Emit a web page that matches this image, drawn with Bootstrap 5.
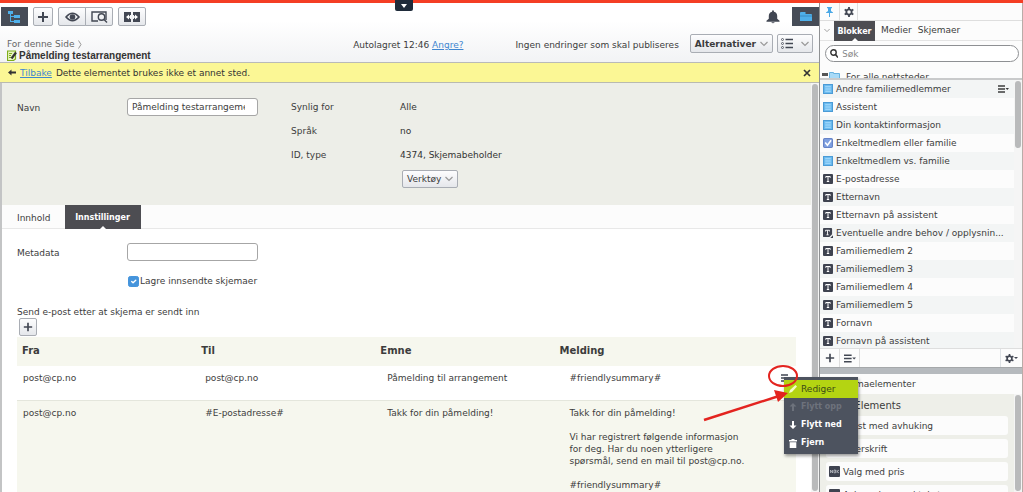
<!DOCTYPE html>
<html lang="no">
<head>
<meta charset="utf-8">
<meta name="viewport" content="width=device-width, initial-scale=1">
<title>Påmelding testarrangement</title>
<link href="https://cdn.jsdelivr.net/npm/bootstrap@5.3.0/dist/css/bootstrap.min.css" rel="stylesheet">
<script src="https://cdn.jsdelivr.net/npm/bootstrap@5.3.0/dist/js/bootstrap.bundle.min.js"></script>
<style>
  body { font: 9px/12px "DejaVu Sans", Verdana, sans-serif; color: #3c3c3c; background: #fff; }
  .app { height: 100vh; border-top: 3px solid #f43e24; }
  svg { display: block; flex: none; }
  .ink { color: #424753; }
  a { color: #3f86d0; }

  .pull-tab { position: absolute; top: -3px; left: 395px; width: 18px; height: 11px; background: #1f2b3a; border-radius: 0 0 2px 2px; }
  .editor { min-width: 0; }
  .head { height: 60px; background: linear-gradient(#fff 30%, #f2f3f5); border-bottom: 1px solid #b9bab9; }
  .tools { height: 31px; padding: 4px 0 0 1px; gap: 5px; }
  .btn-tool { --bs-btn-padding-x: 0; --bs-btn-padding-y: 0; --bs-btn-font-size: 9px; --bs-btn-line-height: 12px; --bs-btn-border-radius: 2px;
    --bs-btn-border-color: #a9adb4; --bs-btn-color: #3c3c3c; display: inline-flex; align-items: center; justify-content: center;
    height: 19px; background: linear-gradient(#fdfdfe, #e5e7eb); }
  .btn-tool.on { background: #464c57; border-color: #464c57; color: #4fb0ea; border-radius: 0; }
  .w-20 { width: 20px; } .w-28 { width: 28px; } .w-27 { width: 27px; } .w-36 { width: 36px; } .w-18 { width: 18px; }
  .crumbs { padding: 4px 0 0 7px; color: #666; }
  .doc-title { font: bold 10px/10px "Liberation Sans", Arial, sans-serif; color: #333; padding-left: 7px; gap: 2px; }
  .status { padding-top: 5px; }
  .head-actions { padding: 0 6px 0 11px; }
  .notice { height: 20px; padding: 0 8px; background: #fbf795; color: #333; border-bottom: 1px solid #b9bab0; }

  .canvas { min-height: 0; border-left: 2px solid #c3c4c5; }
  .props { padding: 15px 0 18px 15px; height: 122px; background: #edeee8; }
  .c-label { width: 110px; flex: none; }
  .field { width: 131px; min-height: 0; height: 18px; padding: 0 12px 0 4px; font-size: 9px; line-height: 12px; color: #3c3c3c; border: 1px solid #a6a6a6; border-radius: 3px; }
  .facts { display: grid; grid-template-columns: 109px auto; row-gap: 12px; margin: 3px 0 0 33px; }
  .facts dt { font-weight: normal; }
  .facts dd { margin: 0; color: #333; }
  .facts .btn-tool { margin: -3px 0 0 2px; height: 18px; }

  .tabs { height: 24px; border-bottom: 1px solid #e8e8e8; background: #fcfcfc; }
  .tabs .nav-link { padding: 0 14px 0 15px; line-height: 26px; color: #3c3c3c; }
  .tabs .nav-link.active { position: relative; width: 76px; padding: 0; text-align: center; background: #4d4d52; color: #fff; font-weight: bold; font-size: 8px; height: 24px; }
  .nav-link.active::after { content: ""; position: absolute; left: 50%; bottom: 0; margin-left: -3px; border: 3px solid transparent; border-top: 0; border-bottom-color: #fff; }

  .settings { padding: 14px 15px 0; }
  .tick-row { gap: 1px; margin: 14px 0 15px; }
  .tick { width: 11px; height: 11px; margin: 0; border-radius: 2px; }
  .tick:checked { background-color: #4594dc; border-color: #4594dc; }
  .btn-add { height: 18px; margin: 0 0 0 2px; }
  .mails { margin: 1px 0 0; font-size: 9px; color: #3c3c3c; border-color: #e6e8e0; table-layout: fixed; --bs-table-bg: transparent; }
  .mails th, .mails td { border: 0; padding: 0; vertical-align: top; color: inherit; }
  .mails th { height: 29px; padding: 8px 0 0 5px; font-size: 10px; }
  .mails thead, .mails .alt { background: #f6f7ee; }
  .mails td { height: 34px; padding: 6px 0 0 6px; }
  .mails td:nth-child(2) { padding-left: 9px; }
  .mails td:nth-child(3) { padding-left: 12px; }
  .mails td:nth-child(4) { padding-left: 15px; }
  .mails .alt td { height: 100px; border-top: 1px solid #e4e6dc; }
  .c-mail { width: 23%; }
  .msg { width: 180px; }

  .row-menu { position: absolute; z-index: 20; top: 11px; right: -62px; width: 74px; padding: 3px 0 2px; background: #4d535f; box-shadow: 1px 2px 3px #0006; }
  .row-menu button { display: flex; align-items: center; gap: 4px; width: 100%; height: 18px; padding: 0 5px; border: 0; background: none; color: #fff; font-weight: bold; font-size: 8px; }
  .row-menu .pick { background: #b4d412; color: #3b4a16; font-weight: normal; font-size: 9px; }
  .row-menu .off { color: #6d727c; }
  .marker { position: absolute; z-index: 21; top: -3px; right: -4px; }

  .thumb { width: 6px; border-radius: 3px; background: #b9babb; }
  .track { width: 8px; padding: 1px; background: #f5f5f5; }
  .side { width: 204px; flex: none; border-left: 1px solid #8f9193; border-right: 1px solid #b9aca8; background: #fcfcfc; position: relative; }
  .side-top { height: 18px; border-bottom: 1px solid #dedede; }
  .side-top button, .side-foot button { height: 100%; border: 0; border-right: 1px solid #dedede; background: none; padding: 0; display: flex; align-items: center; justify-content: center; }
  .side-tabs { height: 20px; border-bottom: 1px solid #e4e4e4; }
  .side-tabs .nav-link { padding: 0 0 0 6px; line-height: 21px; color: #3c3c3c; }
  .side-tabs .nav-link.active { position: relative; width: 41px; height: 20px; padding: 0; text-align: center; background: #4d4d52; color: #fff; font-weight: bold; font-size: 8px; }
  .search { height: 17px; margin: 4px 3px 0 5px; padding: 0 4px; border: 1px solid #8e9093; border-radius: 9px; background: #fff; }
  .search input { border: 0; padding: 0; font-size: 9px; line-height: 12px; min-height: 0; background: none; }
  .search input::placeholder { color: #888; }
  .peek { height: 18px; padding: 9px 0 0 2px; overflow: hidden; border-bottom: 2px solid #c9cacb; }
  .blocks { height: 268px; overflow: hidden; }
  .blocks li { height: 18px; display: flex; align-items: center; gap: 3px; padding: 0 5px 0 3px; white-space: nowrap; }
  .blocks li:nth-child(odd) { background: #f3f5f5; }
  .side-foot { height: 20px; border-top: 1px solid #dedede; border-bottom: 1px solid #a5a8aa; }
  .side .splitter { height: 6px; background: #b6babe; }
  .elements { background: #eeefe9; padding: 6px 6px 0; }
  .elements-title { font-size: 10px; margin-bottom: 4px; }
  .tile { height: 19px; margin-bottom: 4px; padding: 0 3px; display: flex; align-items: center; gap: 3px; background: #fcfcfc; border-radius: 3px; }
</style>
</head>
<body class="overflow-hidden">

<svg width="0" height="0" class="position-absolute" aria-hidden="true">
  <symbol id="i-plus" viewBox="0 0 12 12"><path d="M6 1v10M1 6h10" stroke="currentColor" stroke-width="2"/></symbol>
  <symbol id="i-chev" viewBox="0 0 8 6"><path d="M.5 1 4 4.500 7.500 1" fill="none" stroke="#999" stroke-width="1.200"/></symbol>
  <symbol id="i-burger" viewBox="0 0 11 8"><path d="M0 1h7M0 4h7M0 7h7" stroke="currentColor" stroke-width="1.400"/><path d="M7.500 3h3.500l-1.700 2z" fill="currentColor"/></symbol>
  <symbol id="i-gear" viewBox="0 0 12 12"><circle cx="6" cy="6" r="3.200" fill="none" stroke="currentColor" stroke-width="2.200"/><path d="M6 0v2.500M6 9.500V12M.8 3l2.100 1.200M9.100 7.800l2.100 1.200M.8 9l2.100-1.200M9.100 4.200 11.200 3" stroke="currentColor" stroke-width="2.200"/></symbol>
  <symbol id="i-block" viewBox="0 0 9 9"><path d="M.5.5h8v8h-8z" fill="#6cbcf0" stroke="#4b9bd6"/><path d="M2 2.500h5M2 4.500h5M2 6.500h5" stroke="#b4e2ff" stroke-width=".8"/></symbol>
  <symbol id="i-check" viewBox="0 0 9 9"><rect x=".5" y=".5" width="8" height="8" rx="1" fill="#7fa0e0" stroke="#6683c8"/><path d="m2 4 2 2.500L7.300 2" fill="none" stroke="#fff" stroke-width="1.400"/></symbol>
  <symbol id="i-text" viewBox="0 0 10 10"><rect width="10" height="10" rx="1" fill="#3f4350"/><path d="M2.800 3.800V2.500h4.400v1.300M5 2.500v5M3.800 7.500h2.400" fill="none" stroke="#fff"/></symbol>
  <symbol id="i-area" viewBox="0 0 11 11"><path d="M1 0h8q1 0 1 1v6L7 10H1q-1 0-1-1V1q0-1 1-1zM11 8v3H8z" fill="#3f4350"/><path d="M2.800 3.800V2.500h4.400v1.300M5 2.500v5M3.800 7.500h2.400" fill="none" stroke="#fff"/></symbol>
  <symbol id="i-nok" viewBox="0 0 11 11"><rect width="11" height="11" rx="1" fill="#3f4350"/><path d="M1.500 7V4l2 3V4M5 4h1.500v2.800H5zM8 4v3M10 4 8.200 5.500 10 7" fill="none" stroke="#c5c8cf" stroke-width=".7"/></symbol>
  <symbol id="i-up" viewBox="0 0 8 8"><path d="M4 0l3.500 3.500H5V8H3V3.500H.5z" fill="currentColor"/></symbol>
</svg>

<div class="app d-flex position-relative">
  <button class="pull-tab border-0 p-0" aria-label="Vis meny"><svg width="6" height="4" class="mx-auto"><path d="M0 0h6L3 4z" fill="#fff"/></svg></button>

  <main class="editor flex-grow-1 d-flex flex-column">
    <header class="head flex-shrink-0">
      <div class="tools d-flex align-items-start ink">
        <button class="btn btn-tool on w-27" aria-label="Tre"><svg width="13" height="12" fill="currentColor"><path d="M0 0h5v3H3v2h3v1H3v4h3v1H2V3H0zM6 4h6v3H6zM6 9h6v3H6z"/></svg></button>
        <button class="btn btn-tool w-20 ink" aria-label="Ny"><svg width="12" height="12"><use href="#i-plus"/></svg></button>
        <div class="btn-group" role="group">
          <button class="btn btn-tool w-28 ink" aria-label="Vis"><svg width="15" height="10" viewBox="0 0 15 10"><path d="M1 5q6.500-7.500 13 0Q7.500 12.500 1 5z" fill="none" stroke="currentColor" stroke-width="1.600"/><circle cx="7.500" cy="5" r="2.800" fill="currentColor"/></svg></button>
          <button class="btn btn-tool w-28 ink" aria-label="Forhåndsvis"><svg width="17" height="12" viewBox="0 0 17 12" fill="none" stroke="currentColor" stroke-width="1.400"><path d="M7 10H1V1h14v8"/><circle cx="10.500" cy="6" r="3.200"/><path d="m13 8.500 3 3"/></svg></button>
        </div>
        <button class="btn btn-tool w-28 ink" aria-label="Utvid"><svg width="16" height="10" viewBox="0 0 16 10"><path d="M0 0h7v3H6v4h1v3H0zM9 0h7v10H9V7h1V3H9z" fill="currentColor"/><path d="M2 5l3-2.500v5zM14 5l-3-2.500v5z" fill="#fff"/><path d="M4.500 5H7M9 5h2.500" stroke="#fff" stroke-width="1.400"/></svg></button>
        <div class="ms-auto d-flex align-items-center gap-2">
          <svg width="14" height="14" viewBox="0 0 15 14" class="me-1" fill="currentColor"><path d="M6.500 0h2v1.300Q12 2 12 6v3l2.500 2v1H.5v-1L3 9V6q0-4 3.500-4.700zM5.500 12.500h4q-2 2.500-4 0z"/></svg>
          <button class="btn btn-tool on w-27" aria-label="Mapper"><svg width="12" height="10" viewBox="0 0 12 10" fill="currentColor"><path d="M1 0h4.500v2H11q1 0 1 1v6H0V1q0-1 1-1z"/><path d="M0 4h12" stroke="#2f7fb5" stroke-width=".7"/></svg></button>
        </div>
      </div>
      <div class="d-flex align-items-start justify-content-between">
        <div>
          <div class="crumbs d-flex align-items-center gap-1"><span>For denne Side</span> <svg width="4" height="9"><path d="M.5.5 3 4.500.5 8.500" fill="none" stroke="#999"/></svg></div>
          <div class="doc-title d-flex align-items-center"><svg width="10" height="11" viewBox="0 0 10 11"><path d="M.5 1h8v8l-2 1.500h-6z" fill="#e9f5c4" stroke="#7fae1c" stroke-width="1.200"/><path d="M2 3.500h3M2 5.500h2M2 7.500h2" stroke="#7fae1c"/><path d="m4.500 8.500 4.500-6" stroke="#333" stroke-width="2.200"/></svg><span>Påmelding testarrangement</span></div>
        </div>
        <div class="d-flex flex-shrink-0">
          <div class="d-flex status gap-5">
            <span class="me-1">Autolagret 12:46 <a href="#">Angre?</a></span>
            <span>Ingen endringer som skal publiseres</span>
          </div>
          <div class="d-flex gap-1 head-actions">
            <button class="btn btn-tool fw-bold px-1 gap-1">Alternativer <svg width="8" height="6"><use href="#i-chev"/></svg></button>
            <button class="btn btn-tool w-36 gap-2" aria-label="Listevisning"><svg width="12" height="11" viewBox="0 0 12 11"><path d="M4.500 1.500H12M4.500 5.500H12M4.500 9.500H12" stroke="#424753" stroke-width="1.500"/><g fill="none" stroke="#424753" stroke-width=".8"><circle cx="1.500" cy="1.500" r="1"/><circle cx="1.500" cy="5.500" r="1"/><circle cx="1.500" cy="9.500" r="1"/></g></svg><svg width="8" height="6"><use href="#i-chev"/></svg></button>
          </div>
        </div>
      </div>
    </header>

    <div class="notice flex-shrink-0 d-flex align-items-center gap-1">
      <svg width="8" height="7" viewBox="0 0 8 7"><path d="M0 3.500 3.500.5v2H8v2H3.500v2z" fill="#333"/></svg>
      <a href="#">Tilbake</a><span>Dette elementet brukes ikke et annet sted.</span>
      <button class="border-0 bg-transparent p-0 ms-auto" aria-label="Lukk"><svg width="8" height="8"><path d="m1 1 6 6M7 1 1 7" stroke="#333" stroke-width="1.700"/></svg></button>
    </div>

    <div class="canvas flex-grow-1 d-flex">
      <div class="flex-grow-1">
        <section class="props d-flex align-items-start">
          <label class="c-label pt-1" for="navn">Navn</label>
          <input id="navn" class="form-control field" value="Påmelding testarrangement">
          <dl class="facts">
            <dt>Synlig for</dt><dd>Alle</dd>
            <dt>Språk</dt><dd>no</dd>
            <dt>ID, type</dt><dd>4374, Skjemabeholder</dd>
            <dd></dd><dd><button class="btn btn-tool px-1 gap-1">Verktøy <svg width="8" height="6"><use href="#i-chev"/></svg></button></dd>
          </dl>
        </section>
        <nav class="tabs nav flex-nowrap">
          <a class="nav-link" href="#">Innhold</a>
          <a class="nav-link active" href="#">Innstillinger</a>
        </nav>
        <section class="settings">
          <div class="d-flex align-items-start">
            <label class="c-label pt-1" for="meta">Metadata</label>
            <input id="meta" class="form-control field">
          </div>
          <div class="tick-row d-flex align-items-center">
            <span class="c-label"></span>
            <input id="lagre" type="checkbox" class="form-check-input tick" checked>
            <label for="lagre">Lagre innsendte skjemaer</label>
          </div>
          <div class="pt-1">Send e-post etter at skjema er sendt inn</div>
          <button class="btn btn-tool btn-add w-18 ink d-flex" aria-label="Legg til"><svg width="10" height="10"><use href="#i-plus"/></svg></button>
          <table class="table mails">
            <thead><tr><th class="c-mail">Fra</th><th class="c-mail">Til</th><th class="c-mail">Emne</th><th>Melding</th></tr></thead>
            <tbody>
              <tr><td>post@cp.no</td><td>post@cp.no</td><td>Påmelding til arrangement</td>
                <td class="position-relative">#friendlysummary#
                  <button class="border-0 bg-transparent p-0 position-absolute top-0 end-0 mt-2 me-1 ink" aria-label="Radmeny"><svg width="11" height="8"><use href="#i-burger"/></svg></button>
                  <div class="row-menu">
                    <button class="pick"><svg width="8" height="8"><path d="M0 8l1-3 5.500-5L8 1.500 3 7z" fill="#f3fbc9"/></svg>Rediger</button>
                    <button class="off" disabled><svg width="8" height="8"><use href="#i-up"/></svg>Flytt opp</button>
                    <button><svg width="8" height="8"><use href="#i-up" width="8" height="8" transform="rotate(180 4 4)"/></svg>Flytt ned</button>
                    <button><svg width="8" height="9"><path d="M0 1h2.500V0h3v1H8v1.500H0zM.7 3.300h6.600V9H.7z" fill="#fff"/></svg>Fjern</button>
                  </div>
                  <svg class="marker" width="97" height="60" viewBox="704 363 97 60"><ellipse cx="784" cy="376" rx="14" ry="10" fill="none" stroke="#e3241f" stroke-width="2"/><path d="M705 420 780 396" stroke="#e3241f" stroke-width="2.500"/><path d="m789 393-14-3 4 12z" fill="#e3241f"/></svg>
                </td></tr>
              <tr class="alt"><td>post@cp.no</td><td>#E-postadresse#</td><td>Takk for din påmelding!</td>
                <td><div class="msg"><p class="mb-0">Takk for din påmelding!</p><br><p class="mb-0">Vi har registrert følgende informasjon for deg. Har du noen ytterligere spørsmål, send en mail til post@cp.no.</p><br><p class="mb-0">#friendlysummary#</p></div></td></tr>
            </tbody>
          </table>
        </section>
      </div>
      <div class="track"><div class="thumb h-100"></div></div>
    </div>
  </main>

  <aside class="side d-flex flex-column">
    <div class="side-top d-flex flex-shrink-0 ink">
      <button class="w-20" aria-label="Fest"><svg width="7" height="10" viewBox="0 0 7 10"><path d="M1 0h5v1L5 1.500V4l2 1.500V6H4v4H3V6H0v-.5L2 4V1.500L1 1z" fill="#4aa8e6"/></svg></button>
      <button class="w-18 ink" aria-label="Innstillinger"><svg width="10" height="10"><use href="#i-gear"/></svg></button>
    </div>
    <nav class="side-tabs nav flex-nowrap align-items-center flex-shrink-0">
      <svg width="6" height="5" class="mx-1"><use href="#i-chev"/></svg>
      <a class="nav-link active" href="#">Blokker</a>
      <a class="nav-link" href="#">Medier</a>
      <a class="nav-link" href="#">Skjemaer</a>
    </nav>
    <div class="search d-flex align-items-center gap-1 flex-shrink-0">
      <svg width="8" height="9"><circle cx="3.500" cy="3.500" r="2.700" fill="none" stroke="#333" stroke-width="1.400"/><path d="m5.500 5.500 2.500 3" stroke="#333" stroke-width="1.600"/></svg>
      <input class="form-control" type="search" placeholder="Søk" aria-label="Søk">
    </div>
    <div class="peek d-flex align-items-start flex-shrink-0">
      <svg width="20" height="9"><path d="M0 2h6v3H0z" fill="#555"/><path d="M7.500 1.500h4v1h6v6h-10z" fill="#a8daf7" stroke="#69b3e0"/></svg><span class="ms-1">For alle nettsteder</span>
    </div>
    <div class="d-flex flex-shrink-0">
      <ul class="blocks list-unstyled mb-0 flex-grow-1">
        <li><svg width="10" height="10"><use href="#i-block"/></svg>Andre familiemedlemmer<svg width="11" height="8" class="ms-auto"><use href="#i-burger"/></svg></li>
        <li><svg width="10" height="10"><use href="#i-block"/></svg>Assistent</li>
        <li><svg width="10" height="10"><use href="#i-block"/></svg>Din kontaktinformasjon</li>
        <li><svg width="10" height="10"><use href="#i-check"/></svg>Enkeltmedlem eller familie</li>
        <li><svg width="10" height="10"><use href="#i-block"/></svg>Enkeltmedlem vs. familie</li>
        <li><svg width="10" height="10"><use href="#i-text"/></svg>E-postadresse</li>
        <li><svg width="10" height="10"><use href="#i-text"/></svg>Etternavn</li>
        <li><svg width="10" height="10"><use href="#i-text"/></svg>Etternavn på assistent</li>
        <li><svg width="10" height="10"><use href="#i-area"/></svg>Eventuelle andre behov / opplysnin...</li>
        <li><svg width="10" height="10"><use href="#i-text"/></svg>Familiemedlem 2</li>
        <li><svg width="10" height="10"><use href="#i-text"/></svg>Familiemedlem 3</li>
        <li><svg width="10" height="10"><use href="#i-text"/></svg>Familiemedlem 4</li>
        <li><svg width="10" height="10"><use href="#i-text"/></svg>Familiemedlem 5</li>
        <li><svg width="10" height="10"><use href="#i-text"/></svg>Fornavn</li>
        <li><svg width="10" height="10"><use href="#i-text"/></svg>Fornavn på assistent</li>
      </ul>
      <div class="track"><div class="thumb h-25"></div></div>
    </div>
    <div class="side-foot d-flex flex-shrink-0 ink">
      <button class="w-20 ink" aria-label="Ny blokk"><svg width="10" height="10"><use href="#i-plus"/></svg></button>
      <button class="w-20 ink" aria-label="Meny"><svg width="12" height="9"><use href="#i-burger"/></svg></button>
      <button class="ms-auto border-start border-end-0 px-1 ink" aria-label="Valg"><svg width="9" height="9"><use href="#i-gear"/></svg><svg width="4" height="3"><path d="M0 0h4L2 2z" fill="#424753"/></svg></button>
    </div>
    <div class="splitter flex-shrink-0"></div>
    <div class="px-3 py-1 flex-shrink-0">Skjemaelementer</div>
    <div class="d-flex flex-grow-1 overflow-hidden">
      <div class="elements flex-grow-1">
        <div class="elements-title">Form Elements</div>
        <div class="tile"><svg width="11" height="11"><use href="#i-nok"/></svg>Tekst med avhuking</div>
        <div class="tile"><svg width="11" height="11"><use href="#i-nok"/></svg>Overskrift</div>
        <div class="tile"><svg width="11" height="11"><use href="#i-nok"/></svg>Valg med pris</div>
        <div class="tile"><svg width="11" height="11"><use href="#i-nok"/></svg>Avkrysning med tekst</div>
      </div>
      <div class="track"><div class="thumb h-100"></div></div>
    </div>
  </aside>
</div>
</body>
</html>
